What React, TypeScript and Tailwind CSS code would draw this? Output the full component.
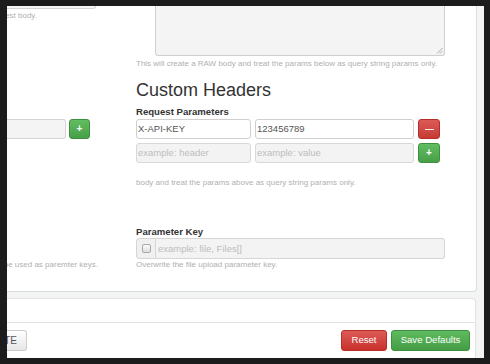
import React from "react";

const font = { fontFamily: '"Liberation Sans", Arial, sans-serif' };

function GreenPlus({ w = "w-[22px]" }: { w?: string }) {
  return (
    <div
      className={`${w} h-[20px] shrink-0 rounded-[3px] border border-[#3e8f3e] bg-gradient-to-b from-[#62bd62] to-[#47a047] flex items-center justify-center text-white text-[10px] leading-none font-bold`}
    >
      +
    </div>
  );
}

function RedMinus() {
  return (
    <div className="w-[22px] h-[20px] shrink-0 rounded-[3px] border border-[#b92c28] bg-gradient-to-b from-[#dc5a56] to-[#c53a35] flex items-center justify-center">
      <div className="w-[9px] h-[1px] bg-white/90" />
    </div>
  );
}

export default function App() {
  return (
    <div
      className="w-[490px] h-[364px] bg-[#1c1c1c] overflow-hidden pt-[6px] pl-[7px] pr-[6px] pb-[6px]"
      style={font}
    >
      <div className="h-full bg-[#f3f4f4] overflow-hidden flex flex-col">
        {/* main card */}
        <div className="h-[286px] shrink-0 mr-[7px] bg-white border-r border-b border-[#dcdcdc] rounded-br-[4px] flex">
          {/* left (cropped) column */}
          <div className="w-[91px] shrink-0 flex flex-col items-end">
            <div className="w-[89px] h-[3px] mr-[2px] border-b border-r border-[#d6d6d6] rounded-br-[3px] bg-[#f6f6f6]" />
            <div className="mt-[1px] mr-[61px] h-[12px] leading-[12px] text-[8px] text-[#b0b0b0] whitespace-nowrap">
              est body.
            </div>
            <div className="mt-[97px] mr-[8px] flex gap-[3px]">
              <div className="w-[59px] h-[20px] border border-l-0 border-[#d4d4d4] rounded-r-[3px] bg-[#f4f4f4]" />
              <GreenPlus w="w-[21px]" />
            </div>
            <div className="mt-[120px] h-[12px] leading-[12px] text-[8px] text-[#b0b0b0] whitespace-nowrap">
              be used as paremter keys.
            </div>
          </div>

          {/* right column */}
          <div className="ml-[38px] w-[309px] shrink-0 flex flex-col">
            <div className="ml-[19px] h-[50px] border border-t-0 border-[#cfcfcf] rounded-b-[3px] bg-[#f4f4f4] relative">
              <svg
                className="absolute right-[1px] bottom-[1px]"
                width="7"
                height="7"
                viewBox="0 0 7 7"
              >
                <line x1="6.5" y1="1" x2="1" y2="6.5" stroke="#9a9a9a" strokeWidth="0.8" />
                <line x1="6.5" y1="4" x2="4" y2="6.5" stroke="#9a9a9a" strokeWidth="0.8" />
              </svg>
            </div>
            <div className="mt-[2px] h-[12px] leading-[12px] text-[8px] text-[#b0b0b0] whitespace-nowrap">
              This will create a RAW body and treat the params below as query string params only.
            </div>
            <div className="mt-[10px] h-[20px] leading-[20px] text-[18px] text-[#333]">
              Custom Headers
            </div>
            <div className="mt-[6px] h-[12px] leading-[12px] text-[9.6px] font-bold text-[#333]">
              Request Parameters
            </div>
            <div className="mt-[1px] flex gap-[4px]">
              <div className="w-[115px] h-[20px] border border-[#cfcfcf] rounded-[3px] bg-white pl-[1px] text-[9.5px] leading-[18px] text-[#555]">
                X-API-KEY
              </div>
              <div className="w-[159px] h-[20px] border border-[#cfcfcf] rounded-[3px] bg-white pl-[1px] text-[9.5px] leading-[18px] text-[#555]">
                123456789
              </div>
              <RedMinus />
            </div>
            <div className="mt-[4px] flex gap-[4px]">
              <div className="w-[115px] h-[20px] border border-[#d8d8d8] rounded-[3px] bg-[#f3f3f3] pl-[1px] text-[9.5px] leading-[18px] text-[#bdbdbd]">
                example: header
              </div>
              <div className="w-[159px] h-[20px] border border-[#d8d8d8] rounded-[3px] bg-[#f3f3f3] pl-[1px] text-[9.5px] leading-[18px] text-[#bdbdbd]">
                example: value
              </div>
              <GreenPlus />
            </div>
            <div className="mt-[14px] h-[12px] leading-[12px] text-[8px] text-[#b0b0b0] whitespace-nowrap">
              body and treat the params above as query string params only.
            </div>
            <div className="mt-[37px] h-[12px] leading-[12px] text-[9.6px] font-bold text-[#333]">
              Parameter Key
            </div>
            <div className="flex h-[21px]">
              <div className="w-[20px] h-full border border-[#d6d6d6] rounded-l-[3px] bg-[#f0f0f0] flex items-center justify-center">
                <div className="w-[9px] h-[9px] border border-[#a8a8a8] rounded-[2px] bg-gradient-to-b from-[#fafafa] to-[#dedede]" />
              </div>
              <div className="flex-1 h-full border border-l-0 border-[#d6d6d6] rounded-r-[3px] bg-[#f3f3f3] pl-[2px] text-[9.5px] leading-[19px] text-[#bdbdbd]">
                example: file, Files[]
              </div>
            </div>
            <div className="h-[12px] leading-[12px] text-[8px] text-[#b0b0b0] whitespace-nowrap">
              Overwrite the file upload parameter key.
            </div>
          </div>
        </div>

        {/* bottom panel */}
        <div className="mt-[6px] flex-1 mr-[8px] bg-white border-t border-r border-[#e2e2e2] rounded-tr-[4px] flex flex-col">
          <div className="h-[23px] shrink-0" />
          <div className="flex-1 border-t border-[#e2e2e2] flex items-start justify-between pt-[7px] pr-[5px]">
            <div className="h-[21px] w-[20px] border border-l-0 border-[#cccccc] rounded-r-[3px] bg-gradient-to-b from-white to-[#e6e6e6] flex items-center justify-end pr-[9px] text-[10px] text-[#555]">
              TE
            </div>
            <div className="flex gap-[4px]">
              <div className="h-[21px] w-[46px] border border-[#b92c28] rounded-[3px] bg-gradient-to-b from-[#dc5a56] to-[#c9302c] flex items-center justify-center text-[9.6px] text-white">
                Reset
              </div>
              <div className="h-[21px] w-[79px] border border-[#3e8f3e] rounded-[3px] bg-gradient-to-b from-[#5fbb5f] to-[#449d44] flex items-center justify-center text-[9.6px] text-white">
                Save Defaults
              </div>
            </div>
          </div>
        </div>
      </div>
    </div>
  );
}
